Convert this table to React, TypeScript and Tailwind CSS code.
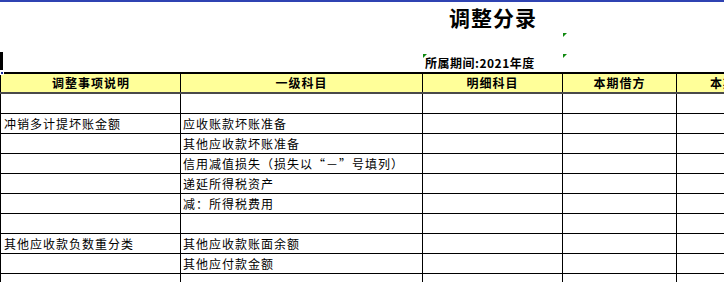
import React from 'react';

const font = "font-['Noto_Sans_CJK_SC',sans-serif]";

interface Row {
  desc?: string;
  account?: string;
}

const rows: Row[] = [
  {},
  { desc: '冲销多计提坏账金额', account: '应收账款坏账准备' },
  { account: '其他应收款坏账准备' },
  { account: '信用减值损失（损失以“－”号填列）' },
  { account: '递延所得税资产' },
  { account: '减：所得税费用' },
  {},
  { desc: '其他应收款负数重分类', account: '其他应收款账面余额' },
  { account: '其他应付款金额' },
  {},
];

const Marker: React.FC = () => (
  <span className="absolute left-0 top-0 w-0 h-0 border-t-[4px] border-t-[#108a10] border-r-[4px] border-r-transparent"></span>
);

const App: React.FC = () => {
  return (
    <div className={`w-[724px] h-[282px] overflow-hidden bg-white relative text-black ${font}`}>
      <div className="h-[2px] bg-[#2f43b2]"></div>

      {/* title rows */}
      <div className="flex h-[31px]">
        <div className="w-[423px] shrink-0"></div>
        <div className="w-[140px] shrink-0 flex items-center justify-center">
          <span className="whitespace-nowrap text-[21px] font-bold tracking-[1px] leading-none">调整分录</span>
        </div>
        <div className="flex-1"></div>
      </div>
      <div className="flex h-[21px]">
        <div className="w-[563px] shrink-0"></div>
        <div className="relative w-[114px] shrink-0"><Marker /></div>
      </div>
      <div className="flex h-[18px]">
        <div className="w-[423px] shrink-0"></div>
        <div className="relative w-[140px] shrink-0 flex items-center pl-[2px]">
          <Marker />
          <span className="whitespace-nowrap text-[12px] font-bold tracking-[0.5px] leading-none">所属期间:2021年度</span>
        </div>
        <div className="relative w-[114px] shrink-0"><Marker /></div>
      </div>

      {/* selection cursor on the left */}
      <div className="absolute left-0 top-[52px] w-[3px] h-[18px] bg-black"></div>
      <div className="absolute left-0 top-[71px] w-[4px] h-[4px] bg-[#1c2f9c] border border-white"></div>

      {/* header */}
      <div className="flex h-[22px] border-t-2 border-t-black border-b-2 border-b-[#4a4a4a] bg-[#ffff99] text-[12px] font-bold tracking-[1px]">
        <div className="w-[2px] shrink-0 border-l border-l-black"></div>
        <div className="w-[179px] shrink-0 border-r border-r-black flex items-center justify-center">调整事项说明</div>
        <div className="w-[242px] shrink-0 border-r border-r-black flex items-center justify-center">一级科目</div>
        <div className="w-[140px] shrink-0 border-r border-r-black flex items-center justify-center">明细科目</div>
        <div className="w-[114px] shrink-0 border-r border-r-black flex items-center justify-center">本期借方</div>
        <div className="flex-1 min-w-0 overflow-hidden flex items-center pl-[33px] whitespace-nowrap">本期贷方</div>
      </div>

      {/* body */}
      {rows.map((r, i) => (
        <div key={i} className="flex h-[20px] border-b border-b-black text-[12px] tracking-[1px]">
          <div className="w-[2px] shrink-0 border-l border-l-black"></div>
          <div className="w-[179px] shrink-0 border-r border-r-black flex items-center pl-[2px] whitespace-nowrap">{r.desc}</div>
          <div className="w-[242px] shrink-0 border-r border-r-black flex items-center pl-[2px] whitespace-nowrap">{r.account}</div>
          <div className="w-[140px] shrink-0 border-r border-r-black"></div>
          <div className="w-[114px] shrink-0 border-r border-r-black"></div>
          <div className="flex-1"></div>
        </div>
      ))}
    </div>
  );
};

export default App;
